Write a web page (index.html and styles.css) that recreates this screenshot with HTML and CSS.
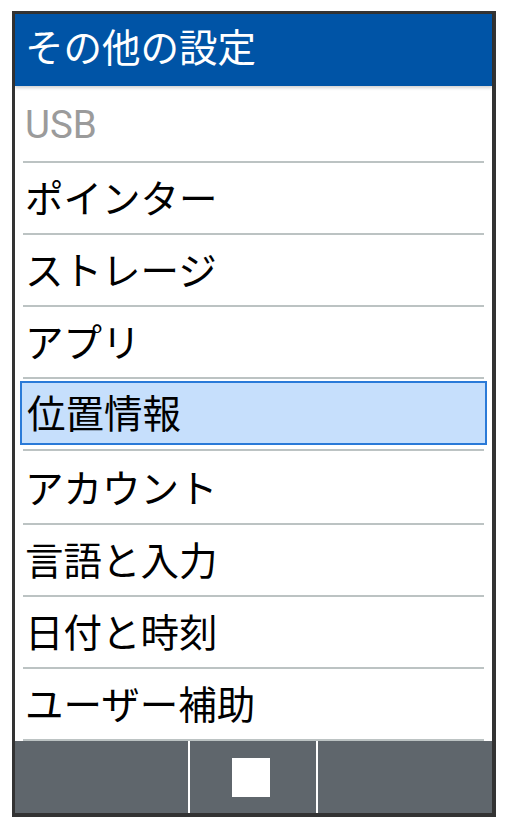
FILE: index.html
```html
<!DOCTYPE html>
<html lang="ja">
<head>
<meta charset="utf-8">
<title>その他の設定</title>
<link rel="stylesheet" href="styles.css">
</head>
<body>
<div class="frame">
  <header class="header">その他の設定</header>
  <ul class="list">
    <li class="row disabled"><span class="label">USB</span></li>
    <li class="row"><span class="label">ポインター</span></li>
    <li class="row"><span class="label">ストレージ</span></li>
    <li class="row"><span class="label">アプリ</span></li>
    <li class="row selected"><span class="label">位置情報</span></li>
    <li class="row"><span class="label">アカウント</span></li>
    <li class="row"><span class="label">言語と入力</span></li>
    <li class="row"><span class="label">日付と時刻</span></li>
    <li class="row"><span class="label">ユーザー補助</span></li>
  </ul>
  <footer class="softkeys">
    <div class="key"></div>
    <div class="key center"><span class="square"></span></div>
    <div class="key"></div>
  </footer>
</div>
</body>
</html>
```

FILE: styles.css
```css
html, body {
  margin: 0;
  padding: 0;
  background: #ffffff;
}

body {
  font-family: Roboto, "Noto Sans CJK JP", sans-serif;
}

.frame {
  margin: 11px 0 0 12px;
  width: 477px;
  border: 3px solid #333333;
  border-right-width: 4px;
  border-bottom-width: 4px;
  background: #ffffff;
  display: flex;
  flex-direction: column;
}

.header {
  height: 72px;
  background: #0054a6;
  color: #ffffff;
  font-size: 38.5px;
  line-height: 70px;
  padding-left: 10px;
  box-shadow: 0 2px 3px rgba(0, 0, 0, 0.18);
  position: relative;
  z-index: 1;
}

.list {
  list-style: none;
  margin: 0;
  padding: 5px 0 0 0;
}

.row {
  box-sizing: border-box;
  height: 72px;
  padding-bottom: 4px;
  margin: 0 8px;
  border-bottom: 2px solid #bcc3c3;
  display: flex;
  align-items: center;
  font-size: 38.5px;
  color: #000000;
}

.row .label {
  padding-left: 2px;
}

.row.disabled {
  color: #9b9b9b;
}

.row.selected {
  margin: 0;
  padding: 0;
  border-bottom: none;
  height: 72px;
  display: block;
}

.row.selected .label {
  display: flex;
  align-items: center;
  box-sizing: border-box;
  height: 64px;
  margin: 2px 5px 0 5px;
  padding: 0 0 4px 5px;
  background: #c6dffc;
  border: 2px solid #2a7ad8;
}

.row.selected::after {
  content: "";
  display: block;
  margin: 4px 8px 0 8px;
  height: 2px;
  background: #bcc3c3;
}

.softkeys {
  height: 72px;
  background: #5f666c;
  display: flex;
}

.key {
  flex: 0 0 auto;
}

.key:first-child {
  width: 173px;
  border-right: 2px solid #ffffff;
}

.key.center {
  width: 128px;
  border-right: 2px solid #ffffff;
  display: flex;
  align-items: center;
  justify-content: center;
  padding-top: 1px;
  box-sizing: border-box;
}

.key:last-child {
  flex: 1 1 auto;
}

.square {
  width: 38px;
  height: 39px;
  margin-right: 4px;
  background: #ffffff;
}
```
